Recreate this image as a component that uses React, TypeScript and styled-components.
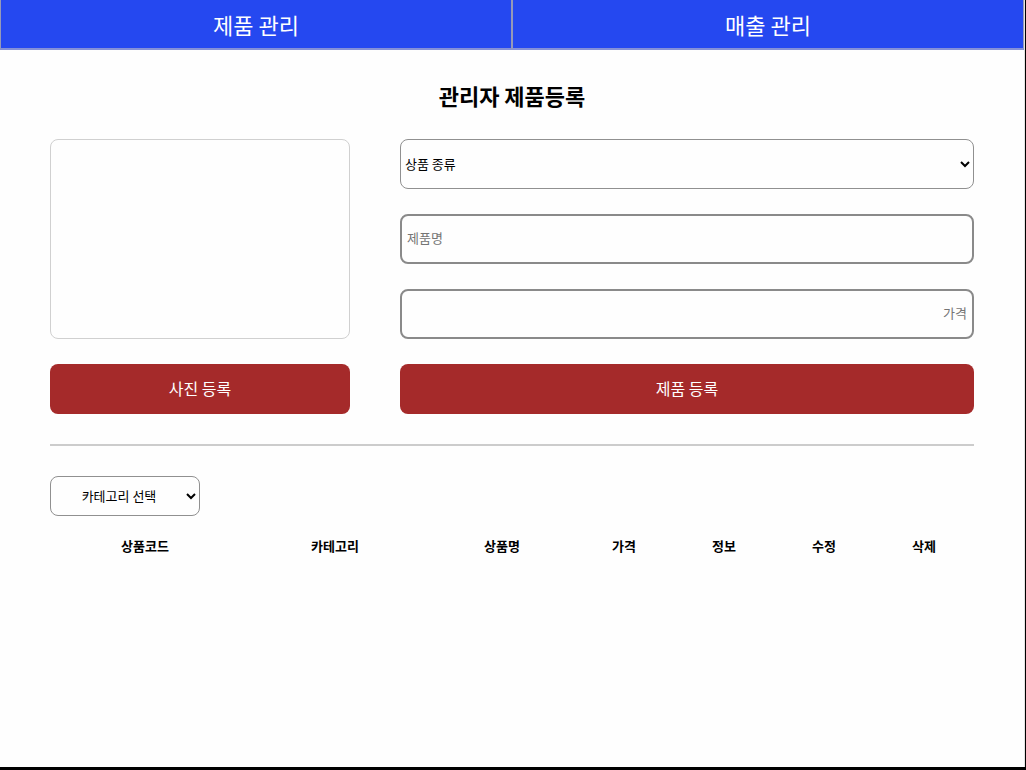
import React from "react";
import styled, { createGlobalStyle } from "styled-components";

const GlobalStyle = createGlobalStyle`
  * { box-sizing: border-box; }
  html { background: #000; }
  body {
    margin: 0;
    font-family: "Noto Sans CJK KR", sans-serif;
    color: #000;
  }
`;

const Page = styled.div`
  min-height: calc(100vh - 3px);
  margin-right: 1px;
  border-right: 1px solid #e4e4e4;
  background: #fefefe;
`;

const Nav = styled.nav`
  display: flex;
`;

const NavLink = styled.a`
  flex: 1;
  height: 50px;
  border: 1px solid #9599b8;
  border-top: 0;
  border-bottom: 2px solid #8590d8;
  background: #2548f0;
  color: #fff;
  font-size: 22px;
  line-height: 48px;
  text-align: center;
  text-decoration: none;
`;

const Main = styled.main`
  padding: 30px 50px;
`;

const Title = styled.h1`
  margin: 0 0 29px;
  font-size: 22px;
  line-height: 30px;
  font-weight: 700;
  text-align: center;
`;

const Form = styled.form`
  display: flex;
  gap: 50px;
  padding-bottom: 30px;
  border-bottom: 2px solid #ccc;
`;

const PhotoColumn = styled.div`
  display: flex;
  flex-direction: column;
  width: 300px;
  gap: 25px;
`;

const Preview = styled.div`
  height: 200px;
  border: 1px solid #d0d0d0;
  border-radius: 8px;
`;

const Fields = styled.div`
  display: flex;
  flex: 1;
  flex-direction: column;
  gap: 25px;
`;

const KindSelect = styled.select`
  width: 100%;
  height: 50px;
  padding-bottom: 2px;
  border: 1px solid #909090;
  border-radius: 8px;
  background: #fefefe;
  color: #000;
  font-family: inherit;
  font-size: 13px;
`;

const TextInput = styled.input<{ $align?: string }>`
  width: 100%;
  height: 50px;
  padding: 0 5px 4px;
  border: 2px solid #8a8a8a;
  border-radius: 8px;
  background: #fefefe;
  font-family: inherit;
  font-size: 13px;
  text-align: ${(p) => p.$align ?? "left"};

  &::placeholder { color: #757575; }
`;

const SubmitButton = styled.button`
  width: 100%;
  height: 50px;
  padding: 0 0 2px;
  border: 0;
  border-radius: 8px;
  background: #a52a2a;
  color: #fff;
  font-family: inherit;
  font-size: 16px;
`;

const CategorySelect = styled(KindSelect)`
  width: 150px;
  height: 40px;
  margin: 30px 0 20px;
  text-align: center;
`;

const Table = styled.table`
  width: 100%;
  border-collapse: collapse;
  table-layout: fixed;
`;

const HeadCell = styled.th<{ $width?: string }>`
  width: ${(p) => p.$width ?? "auto"};
  padding: 0;
  font-size: 13px;
  line-height: 20px;
  font-weight: 700;
`;

const columns = [
  { label: "상품코드", width: "190px" },
  { label: "카테고리", width: "190px" },
  { label: "상품명" },
  { label: "가격", width: "100px" },
  { label: "정보", width: "100px" },
  { label: "수정", width: "100px" },
  { label: "삭제", width: "100px" },
];

export default function App() {
  return (
    <>
      <GlobalStyle />
      <Page>
        <Nav>
          <NavLink href="#products">제품 관리</NavLink>
          <NavLink href="#sales">매출 관리</NavLink>
        </Nav>
        <Main>
          <Title>관리자 제품등록</Title>
          <Form onSubmit={(e) => e.preventDefault()}>
            <PhotoColumn>
              <Preview />
              <SubmitButton type="button">사진 등록</SubmitButton>
            </PhotoColumn>
            <Fields>
              <KindSelect aria-label="상품 종류">
                <option>상품 종류</option>
              </KindSelect>
              <TextInput aria-label="제품명" placeholder="제품명" />
              <TextInput aria-label="가격" placeholder="가격" $align="right" />
              <SubmitButton type="submit">제품 등록</SubmitButton>
            </Fields>
          </Form>
          <CategorySelect aria-label="카테고리 선택">
            <option>카테고리 선택</option>
          </CategorySelect>
          <Table>
            <thead>
              <tr>
                {columns.map((c) => (
                  <HeadCell key={c.label} scope="col" $width={c.width}>{c.label}</HeadCell>
                ))}
              </tr>
            </thead>
          </Table>
        </Main>
      </Page>
    </>
  );
}
